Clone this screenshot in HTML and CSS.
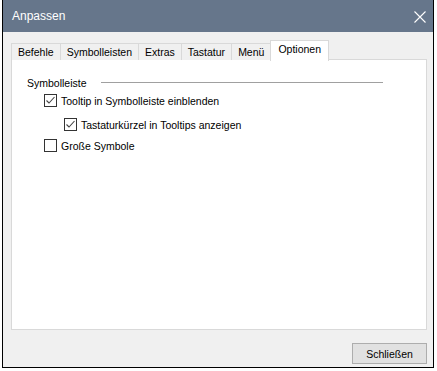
FILE: index.html
```html
<!DOCTYPE html>
<html lang="de">
<head>
    <meta charset="UTF-8">
    <title>Anpassen</title>
    <link rel="stylesheet" href="styles.css">
</head>
<body>
    <div class="window">
        <div class="titlebar">
            <span class="title">Anpassen</span>
            <span class="close">
                <svg width="12" height="12" viewBox="0 0 12 12">
                    <path d="M0.5 0.5 L11.5 11.5 M11.5 0.5 L0.5 11.5" stroke="#fff" stroke-width="1.1" fill="none"/>
                </svg>
            </span>
        </div>
        <div class="content">
            <div class="tabs">
                <div class="tab">Befehle</div>
                <div class="tab">Symbolleisten</div>
                <div class="tab">Extras</div>
                <div class="tab">Tastatur</div>
                <div class="tab">Menü</div>
                <div class="tab active">Optionen</div>
            </div>
            <div class="panel">
                <div class="group-head">
                    <span>Symbolleiste</span>
                    <span class="rule"></span>
                </div>
                <div class="check">
                    <span class="box">
                        <svg width="11" height="11" viewBox="0 0 11 11"><polyline points="1.5,5.5 4,8 9.5,2" stroke="#444" stroke-width="1.1" fill="none"/></svg>
                    </span>
                    <span>Tooltip in Symbolleiste einblenden</span>
                </div>
                <div class="check sub">
                    <span class="box">
                        <svg width="11" height="11" viewBox="0 0 11 11"><polyline points="1.5,5.5 4,8 9.5,2" stroke="#444" stroke-width="1.1" fill="none"/></svg>
                    </span>
                    <span>Tastaturkürzel in Tooltips anzeigen</span>
                </div>
                <div class="check">
                    <span class="box"></span>
                    <span>Große Symbole</span>
                </div>
            </div>
            <div class="footer">
                <button class="btn">Schließen</button>
            </div>
        </div>
    </div>
</body>
</html>
```

FILE: styles.css
```css
body {
    margin: 0;
    background: #fff;
    font-family: "Liberation Sans", Arial, sans-serif;
    font-size: 10.5px;
    color: #000;
}
.window {
    margin-left: 2px;
    width: 432px;
    height: 368px;
    box-sizing: border-box;
    border: 1px solid #000;
    border-top: none;
    display: flex;
    flex-direction: column;
}
.titlebar {
    height: 32px;
    background: #66768b;
    color: #fff;
    display: flex;
    align-items: center;
    justify-content: space-between;
    padding: 0 7px 0 9px;
    font-size: 12px;
}
.close {
    display: flex;
    margin-top: 2px;
}
.content {
    flex: 1;
    background: #f0f0f0;
    padding: 8px 6px 0 8px;
}
.tabs {
    display: flex;
    height: 20px;
    margin-bottom: -1px;
    position: relative;
}
.tab {
    height: 16px;
    line-height: 16px;
    margin-top: 3px;
    padding: 0 6px;
    border: 1px solid #d9d9d9;
    border-bottom: none;
    margin-left: -1px;
    background: #f0f0f0;
}
.tab:first-child {
    margin-left: 0;
}
.tab.active {
    height: 20px;
    margin-top: 0;
    margin-left: -1px;
    padding: 0 7px;
    line-height: 17px;
    background: #fff;
    position: relative;
    z-index: 1;
}
.panel {
    height: 271px;
    box-sizing: border-box;
    border: 1px solid #d9d9d9;
    background: #fff;
    padding: 16px 43px 0 15px;
}
.group-head {
    display: flex;
    align-items: center;
    height: 13px;
    margin-bottom: 5px;
}
.rule {
    flex: 1;
    height: 1px;
    background: #a0a0a0;
    margin-left: 14px;
}
.check {
    display: flex;
    align-items: center;
    gap: 4px;
    height: 13px;
    margin-left: 17px;
}
.check.sub {
    margin: 11px 0 8px 37px;
}
.box {
    width: 13px;
    height: 13px;
    box-sizing: border-box;
    border: 1px solid #333;
    background: #fff;
    display: flex;
}
.footer {
    display: flex;
    justify-content: flex-end;
    padding-top: 13px;
}
.btn {
    width: 75px;
    height: 21px;
    background: #e1e1e1;
    border: 1px solid #adadad;
    font-family: inherit;
    font-size: 10.5px;
    padding: 0;
    color: #000;
}
```
